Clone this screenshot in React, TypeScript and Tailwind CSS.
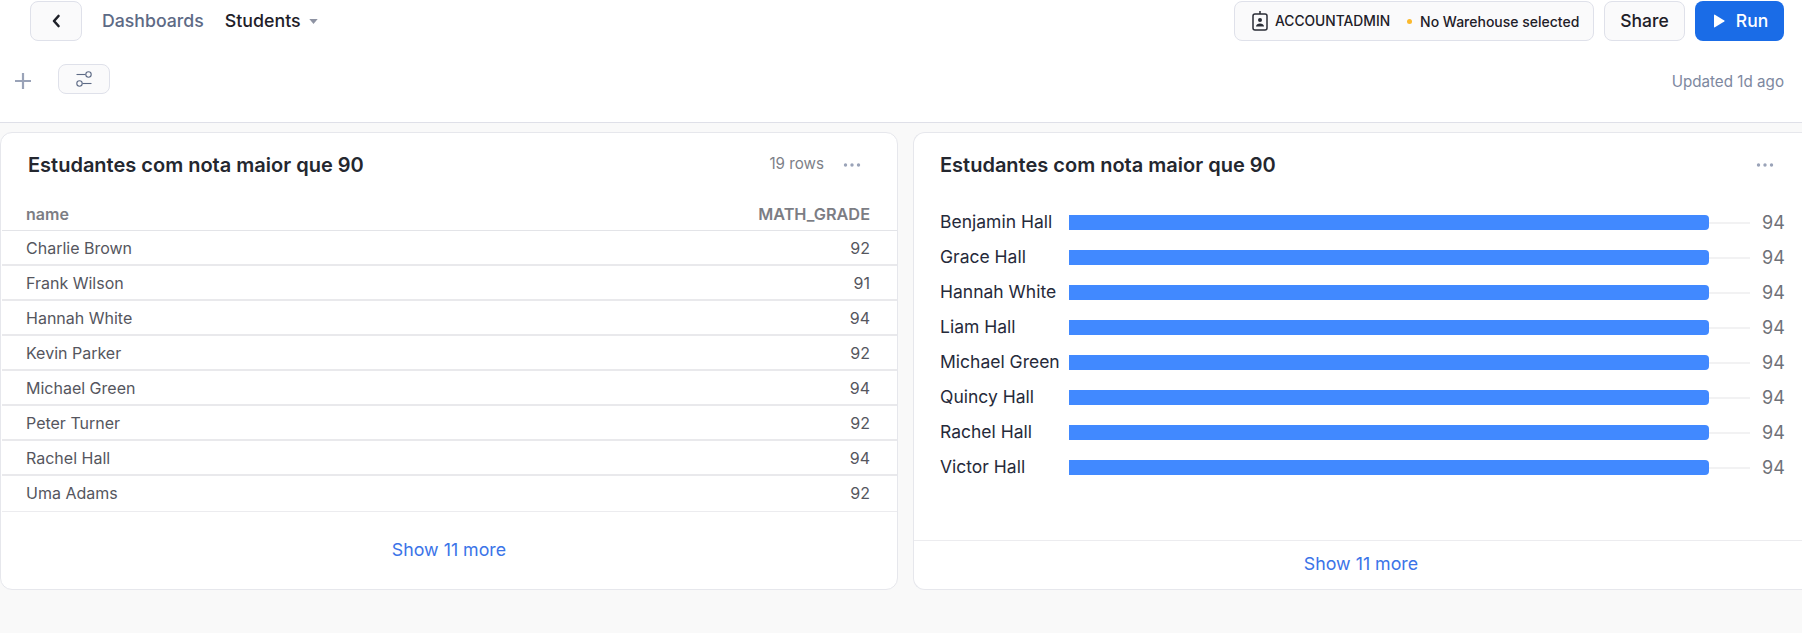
const tableRows: [string, number][] = [
  ["Charlie Brown", 92],
  ["Frank Wilson", 91],
  ["Hannah White", 94],
  ["Kevin Parker", 92],
  ["Michael Green", 94],
  ["Peter Turner", 92],
  ["Rachel Hall", 94],
  ["Uma Adams", 92],
];
const barRows = ["Benjamin Hall", "Grace Hall", "Hannah White", "Liam Hall", "Michael Green", "Quincy Hall", "Rachel Hall", "Victor Hall"];

function Dots() {
  return (
    <svg width="18" height="6" viewBox="0 0 18 6" className="text-[#9aa3b8]">
      <circle cx="2.5" cy="3" r="1.7" fill="currentColor" />
      <circle cx="9" cy="3" r="1.7" fill="currentColor" />
      <circle cx="15.5" cy="3" r="1.7" fill="currentColor" />
    </svg>
  );
}

export default function App() {
  return (
    <div className="h-[633px] w-[1802px] overflow-hidden bg-[#f9f9f9] font-['Inter',sans-serif]">
      <header className="h-[123px] border-b border-[#dfe0e8] bg-white">
        <div className="flex h-[42px] items-start pt-px pl-[30px] pr-[18px]">
          <button className="flex h-[40px] w-[52px] items-center justify-center rounded-lg border border-[#dfe1ea] bg-[#fafafb]">
            <svg width="12" height="14" viewBox="0 0 12 14" fill="none" stroke="#1e2028" strokeWidth="2.6" strokeLinecap="round" strokeLinejoin="round">
              <path d="M8.500 2 4 7l4.500 5" />
            </svg>
          </button>
          <span className="ml-[20px] mt-[9px] text-[17.7px] leading-[22px] font-medium text-[#5d6a85]">Dashboards</span>
          <span className="ml-[21px] mt-[9px] text-[17.8px] leading-[22px] font-medium text-[#1e2028]">Students</span>
          <svg width="9" height="5" viewBox="0 0 10 6" className="ml-[8px] mt-[18px]">
            <path d="M0 0h10L5 6z" fill="#8e93a3" />
          </svg>
          <div className="ml-auto flex h-[40px] w-[360px] items-center rounded-lg border border-[#dfe1ea] bg-[#fafafb] pl-[17px]">
            <svg width="16" height="22" viewBox="0 0 16 22" fill="none">
              <path d="M8 1v3" stroke="#2a2d36" strokeWidth="1.5" />
              <rect x="1" y="4" width="14" height="16" rx="2" stroke="#2a2d36" strokeWidth="1.5" />
              <circle cx="8" cy="10" r="2" fill="#2a2d36" />
              <path d="M4 16.5c0-2 2-3 4-3s4 1 4 3z" fill="#2a2d36" />
            </svg>
            <span className="ml-[7px] text-[13.8px] font-medium text-[#1e2028]">ACCOUNTADMIN</span>
            <span className="ml-[17px] h-[5px] w-[5px] rounded-full bg-[#fbb92d]" />
            <span className="ml-[8px] text-[14px] font-medium text-[#1e2028]">No Warehouse selected</span>
          </div>
          <button className="ml-[10px] h-[40px] w-[81px] rounded-lg border border-[#dfe1ea] bg-[#fafafb] text-[17.5px] font-medium text-[#1e2028]">Share</button>
          <button className="ml-[10px] flex h-[40px] w-[89px] items-center justify-center gap-[11px] rounded-lg bg-[#1a6ce7] pl-[2px] text-[17.5px] font-medium text-white">
            <svg width="12" height="14" viewBox="0 0 12 14"><path d="M1 1.200v11.600a.6.6 0 0 0 .9.5l9.400-5.800a.6.6 0 0 0 0-1L1.900.7a.6.6 0 0 0-.9.5z" fill="#fff" /></svg>
            Run
          </button>
        </div>
        <div className="flex h-[52px] items-start pl-[15px] pr-[18px] pt-[22px]">
          <svg width="16" height="16" viewBox="0 0 16 16" stroke="#9aa3b8" strokeWidth="2.2" className="mt-[9px]"><path d="M8 0v16M0 8h16" /></svg>
          <button className="ml-[27px] flex h-[30px] w-[52px] items-center justify-center rounded-lg border border-[#dfe1ea] bg-[#fafafb]">
            <svg width="16" height="16" viewBox="0 0 16 16" fill="none" stroke="#5d6a85" strokeWidth="1.1">
              <path d="M0.500 3.500h9" /><circle cx="12.500" cy="3.500" r="2.700" />
              <circle cx="3.500" cy="12.500" r="2.700" /><path d="M6.500 12.500h9" />
            </svg>
          </button>
          <span className="ml-auto mt-[9px] text-[15.2px] leading-[18px] text-[#7d88a0]">Updated 1d ago</span>
        </div>
      </header>

      <main className="flex gap-[15px] pt-[9px]">
        <section className="flex h-[458px] w-[898px] flex-col rounded-xl border border-[#e6e7ec] bg-white pl-px">
          <div className="flex h-[62px] items-center pl-[26px] pr-[36px] pt-[1px]">
            <h2 className="text-[20px] font-semibold text-[#24272f]">Estudantes com nota maior que 90</h2>
            <span className="ml-auto text-[15.2px] text-[#7d7f88]">19 rows</span>
            <span className="ml-[19px] flex"><Dots /></span>
          </div>
          <div className="flex h-[36px] items-end justify-between border-b border-[#e3e4e8] pl-[24px] pr-[27px] pb-[4px] text-[16px] font-semibold text-[#7c7d84]">
            <span>name</span>
            <span className="text-[16.300px]">MATH_GRADE</span>
          </div>
          {tableRows.map(([name, grade], i) => (
            <div
              key={name}
              className={
                i === tableRows.length - 1
                  ? "flex h-[36px] items-center justify-between border-b border-[#ececef] pl-[24px] pr-[27px] pb-px text-[16px] text-[#55565e]"
                  : "flex h-[35px] items-center justify-between border-b-2 border-[#e9e9ec] pl-[24px] pr-[27px] text-[16px] text-[#55565e]"
              }
            >
              <span>{name}</span>
              <span>{grade}</span>
            </div>
          ))}
          <div className="flex flex-1 items-center justify-center pr-[1px] text-[17.8px] text-[#3b74e8]">Show 11 more</div>
        </section>

        <section className="flex h-[458px] flex-1 flex-col rounded-l-xl border border-r-0 border-[#e6e7ec] bg-white">
          <div className="flex h-[62px] items-center pl-[26px] pr-[28px] pt-[1px]">
            <h2 className="text-[20px] font-semibold text-[#24272f]">Estudantes com nota maior que 90</h2>
            <span className="ml-auto flex"><Dots /></span>
          </div>
          <div className="flex flex-1 flex-col pt-[10px] pl-[26px]">
            {barRows.map((name) => (
              <div key={name} className="flex h-[35px] shrink-0 items-center">
                <span className="w-[129px] shrink-0 text-[17.5px] text-[#262a3a]">{name}</span>
                <div className="flex h-[15px] w-[681px] items-center">
                  <div className="h-[15px] w-[640px] rounded-r bg-[#4189ff]" />
                  <div className="h-[2px] flex-1 bg-[#f2f2f3]" />
                </div>
                <span className="ml-[12px] text-[18px] text-[#6f7178]">94</span>
              </div>
            ))}
          </div>
          <div className="flex h-[49px] items-center justify-center border-t border-[#ececef] pl-[6px] pb-[2px] text-[17.8px] text-[#3b74e8]">Show 11 more</div>
        </section>
      </main>
    </div>
  );
}
